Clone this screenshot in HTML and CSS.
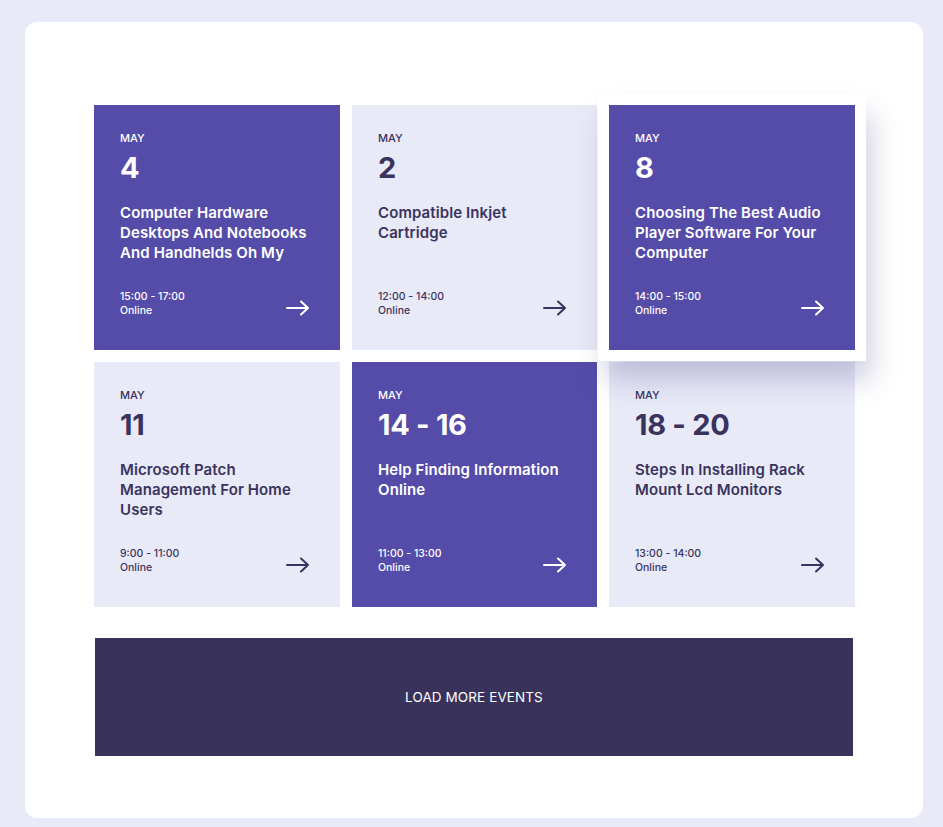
FILE: index.html
```html
<!DOCTYPE html>
<html lang="en">
<head>
<meta charset="utf-8">
<title>Events</title>
<link rel="stylesheet" href="styles.css">
</head>
<body>
<main class="panel">
  <section class="grid">
    <article class="card card-dark">
      <div class="month">MAY</div>
      <div class="day">4</div>
      <h3 class="title">Computer Hardware Desktops And Notebooks And Handhelds Oh My</h3>
      <div class="foot">
        <div class="meta"><div>15:00 - 17:00</div><div>Online</div></div>
        <svg class="arrow" width="24" height="16" viewBox="0 0 24 16"><path d="M1 8H22M15 1.5L22 8L15 14.5" fill="none" stroke="currentColor" stroke-width="2" stroke-linecap="round" stroke-linejoin="round"/></svg>
      </div>
    </article>
    <article class="card card-light">
      <div class="month">MAY</div>
      <div class="day">2</div>
      <h3 class="title">Compatible Inkjet Cartridge</h3>
      <div class="foot">
        <div class="meta"><div>12:00 - 14:00</div><div>Online</div></div>
        <svg class="arrow" width="24" height="16" viewBox="0 0 24 16"><path d="M1 8H22M15 1.5L22 8L15 14.5" fill="none" stroke="currentColor" stroke-width="2" stroke-linecap="round" stroke-linejoin="round"/></svg>
      </div>
    </article>
    <article class="card card-dark card-hover">
      <div class="month">MAY</div>
      <div class="day">8</div>
      <h3 class="title">Choosing The Best Audio Player Software For Your Computer</h3>
      <div class="foot">
        <div class="meta"><div>14:00 - 15:00</div><div>Online</div></div>
        <svg class="arrow" width="24" height="16" viewBox="0 0 24 16"><path d="M1 8H22M15 1.5L22 8L15 14.5" fill="none" stroke="currentColor" stroke-width="2" stroke-linecap="round" stroke-linejoin="round"/></svg>
      </div>
    </article>
    <article class="card card-light">
      <div class="month">MAY</div>
      <div class="day">11</div>
      <h3 class="title">Microsoft Patch Management For Home Users</h3>
      <div class="foot">
        <div class="meta"><div>9:00 - 11:00</div><div>Online</div></div>
        <svg class="arrow" width="24" height="16" viewBox="0 0 24 16"><path d="M1 8H22M15 1.5L22 8L15 14.5" fill="none" stroke="currentColor" stroke-width="2" stroke-linecap="round" stroke-linejoin="round"/></svg>
      </div>
    </article>
    <article class="card card-dark">
      <div class="month">MAY</div>
      <div class="day">14 - 16</div>
      <h3 class="title">Help Finding Information Online</h3>
      <div class="foot">
        <div class="meta"><div>11:00 - 13:00</div><div>Online</div></div>
        <svg class="arrow" width="24" height="16" viewBox="0 0 24 16"><path d="M1 8H22M15 1.5L22 8L15 14.5" fill="none" stroke="currentColor" stroke-width="2" stroke-linecap="round" stroke-linejoin="round"/></svg>
      </div>
    </article>
    <article class="card card-light">
      <div class="month">MAY</div>
      <div class="day">18 - 20</div>
      <h3 class="title">Steps In Installing Rack Mount Lcd Monitors</h3>
      <div class="foot">
        <div class="meta"><div>13:00 - 14:00</div><div>Online</div></div>
        <svg class="arrow" width="24" height="16" viewBox="0 0 24 16"><path d="M1 8H22M15 1.5L22 8L15 14.5" fill="none" stroke="currentColor" stroke-width="2" stroke-linecap="round" stroke-linejoin="round"/></svg>
      </div>
    </article>
  </section>
  <button class="load-more" type="button">LOAD MORE EVENTS</button>
</main>
</body>
</html>
```
FILE: styles.css
```css
html, body {
  margin: 0;
  padding: 0;
}
body {
  background: #e9eaf7;
  font-family: Inter, Lato, sans-serif;
  padding: 22px 20px 9px 25px;
}
.panel {
  background: #ffffff;
  border-radius: 12px;
  height: 796px;
  box-sizing: border-box;
  padding: 83px 69px 0 69px;
}
.grid {
  display: grid;
  grid-template-columns: 246px 245px 246px;
  grid-auto-rows: 245px;
  column-gap: 12px;
  row-gap: 12px;
}
.card {
  display: flex;
  flex-direction: column;
  padding: 26px 31px 32px 26px;
  box-sizing: border-box;
}
.card-dark {
  background: #554ba9;
  color: #ffffff;
}
.card-light {
  background: #e9eaf7;
  color: #39335e;
}
.card-hover {
  position: relative;
  z-index: 2;
  box-shadow: 0 0 0 11px #ffffff, 6px 20px 26px 10px rgba(70, 64, 140, 0.26);
}
.month {
  font-size: 11px;
  line-height: 14px;
  font-weight: 500;
}
.day {
  font-size: 29px;
  line-height: 34px;
  font-weight: 700;
  margin-top: 6px;
  letter-spacing: -0.3px;
}
.title {
  margin: 18px 0 0 0;
  font-size: 15px;
  line-height: 20px;
  font-weight: 600;
  letter-spacing: 0.1px;
}
.foot {
  margin-top: auto;
  display: flex;
  align-items: flex-end;
  justify-content: space-between;
}
.meta {
  font-size: 10.5px;
  line-height: 14px;
  font-weight: 500;
}
.arrow {
  display: block;
  margin-bottom: 2px;
  margin-right: -1px;
}
.load-more {
  display: block;
  width: 758px;
  height: 118px;
  margin: 31px 0 0 1px;
  border: 0;
  background: #39335c;
  color: #ffffff;
  font-family: Inter, Lato, sans-serif;
  font-size: 13.5px;
  letter-spacing: 0.1px;
  padding: 0;
}
```
